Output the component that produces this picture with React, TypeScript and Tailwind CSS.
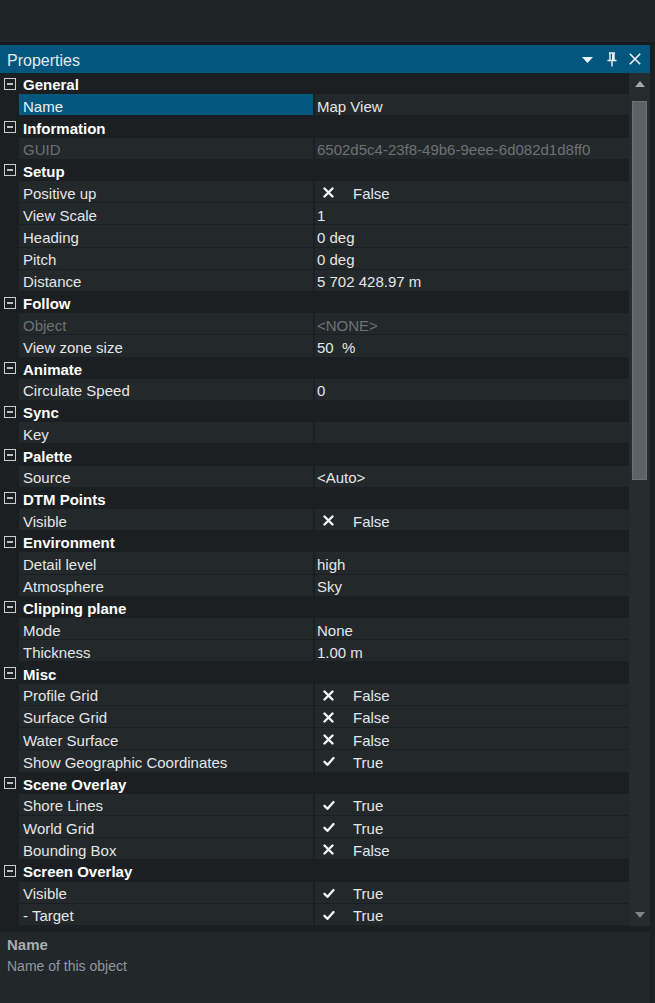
import React from "react";

type Row = { l: string; v?: string; b?: boolean; disabled?: boolean; selected?: boolean };
type Section = { name: string; rows: Row[] };

const sections: Section[] = [
  { name: "General", rows: [{ l: "Name", v: "Map View", selected: true }] },
  { name: "Information", rows: [{ l: "GUID", v: "6502d5c4-23f8-49b6-9eee-6d082d1d8ff0", disabled: true }] },
  {
    name: "Setup",
    rows: [
      { l: "Positive up", b: false },
      { l: "View Scale", v: "1" },
      { l: "Heading", v: "0 deg" },
      { l: "Pitch", v: "0 deg" },
      { l: "Distance", v: "5 702 428.97 m" },
    ],
  },
  {
    name: "Follow",
    rows: [
      { l: "Object", v: "<NONE>", disabled: true },
      { l: "View zone size", v: "50  %" },
    ],
  },
  { name: "Animate", rows: [{ l: "Circulate Speed", v: "0" }] },
  { name: "Sync", rows: [{ l: "Key", v: "" }] },
  { name: "Palette", rows: [{ l: "Source", v: "<Auto>" }] },
  { name: "DTM Points", rows: [{ l: "Visible", b: false }] },
  {
    name: "Environment",
    rows: [
      { l: "Detail level", v: "high" },
      { l: "Atmosphere", v: "Sky" },
    ],
  },
  {
    name: "Clipping plane",
    rows: [
      { l: "Mode", v: "None" },
      { l: "Thickness", v: "1.00 m" },
    ],
  },
  {
    name: "Misc",
    rows: [
      { l: "Profile Grid", b: false },
      { l: "Surface Grid", b: false },
      { l: "Water Surface", b: false },
      { l: "Show Geographic Coordinates", b: true },
    ],
  },
  {
    name: "Scene Overlay",
    rows: [
      { l: "Shore Lines", b: true },
      { l: "World Grid", b: true },
      { l: "Bounding Box", b: false },
    ],
  },
  {
    name: "Screen Overlay",
    rows: [
      { l: "Visible", b: true },
      { l: "- Target", b: true },
    ],
  },
];

const Minus = () => (
  <svg width="12" height="12" viewBox="0 0 12 12" className="shrink-0">
    <rect x="0.5" y="0.5" width="11" height="11" fill="none" stroke="#c9cdd0" strokeWidth="1" />
    <line x1="3" y1="6" x2="9" y2="6" stroke="#e6e8ea" strokeWidth="1.6" />
  </svg>
);

const Cross = () => (
  <svg width="11" height="11" viewBox="0 0 11 11">
    <path d="M1.5 1.5 L9.5 9.5 M9.5 1.5 L1.5 9.5" stroke="#f4f4f4" strokeWidth="2.4" strokeLinecap="round" />
  </svg>
);

const Check = () => (
  <svg width="12" height="11" viewBox="0 0 12 11">
    <path d="M1.5 5.8 L4.6 8.8 L10.5 2" stroke="#f4f4f4" strokeWidth="2.3" fill="none" strokeLinecap="round" strokeLinejoin="round" />
  </svg>
);

function CategoryRow({ name }: { name: string }) {
  return (
    <div className="flex-1 min-h-0 flex items-center bg-[#1b1f21]">
      <div className="w-[19px] flex justify-center pl-[1px]">
        <Minus />
      </div>
      <span className="pl-[4px] pt-[2px] font-bold text-[15px] text-white leading-none">{name}</span>
    </div>
  );
}

function PropRow({ row }: { row: Row }) {
  const labelColor = row.disabled ? "text-[#6d7275]" : "text-[#e4e6e8]";
  return (
    <div className="flex-1 min-h-0 flex bg-[#1b1f21] pb-[1px]">
      <div className="w-[19px] shrink-0" />
      <div
        className={
          "w-[294px] shrink-0 flex items-center pl-[4px] pt-[3px] text-[15px] leading-none " +
          (row.selected ? "bg-[#02587f] text-[#eef2f4]" : "bg-[#23282a] " + labelColor)
        }
      >
        {row.l}
      </div>
      <div className="w-[2px] shrink-0" />
      <div
        className={
          "flex-1 flex items-center pl-[2px] pt-[3px] text-[15px] leading-none whitespace-pre bg-[#23282a] " +
          (row.disabled ? "text-[#6d7275]" : "text-[#e4e6e8]")
        }
      >
        {row.b !== undefined ? (
          <>
            <span className="w-[22px] flex justify-center pl-[1px] -mt-[1px]">{row.b ? <Check /> : <Cross />}</span>
            <span className="pl-[14px]">{row.b ? "True" : "False"}</span>
          </>
        ) : (
          row.v
        )}
      </div>
    </div>
  );
}

export default function App() {
  return (
    <div
      className="w-[655px] h-[1003px] bg-[#1c2023] flex flex-col overflow-hidden"
      style={{ fontFamily: '"Liberation Sans", Arial, sans-serif' }}
    >
      <div className="h-[42px] bg-[#1f2427] shrink-0" />
      <div className="h-[3px] bg-[#181c1e] shrink-0" />
      <div className="flex flex-col w-[650px] flex-1 min-h-0">
        {/* Header */}
        <div className="h-[28px] shrink-0 bg-[#03577f] flex items-center pl-[7px] pr-[9px]">
          <span className="text-[16px] text-[#e3eaee] leading-none flex-1 pt-[3px]">Properties</span>
          <svg width="11" height="7" viewBox="0 0 11 7" className="mr-[14px] mt-[3px]">
            <path d="M0 0 L11 0 L5.5 6 Z" fill="#f2f5f7" />
          </svg>
          <svg width="10" height="15" viewBox="0 0 10 15" className="mr-[12px]">
            <path d="M2 1 H8 M3 1 V8 M7 1 V8 M0.5 8.5 H9.5 M5 9 V14.5" stroke="#f2f5f7" strokeWidth="1.4" fill="none" />
            <rect x="5" y="1.5" width="2" height="6.5" fill="#f2f5f7" />
          </svg>
          <svg width="12" height="12" viewBox="0 0 12 12">
            <path d="M0.8 0.8 L11.2 11.2 M11.2 0.8 L0.8 11.2" stroke="#f2f5f7" strokeWidth="1.6" />
          </svg>
        </div>
        {/* Grid + scrollbar */}
        <div className="h-[853px] shrink-0 flex">
          <div className="flex-1 flex flex-col">
            {sections.map((s) => (
              <React.Fragment key={s.name}>
                <CategoryRow name={s.name} />
                {s.rows.map((r, i) => (
                  <PropRow key={s.name + i} row={r} />
                ))}
              </React.Fragment>
            ))}
          </div>
          <div className="w-[21px] shrink-0 bg-[#262b2e] flex flex-col items-center">
            <div className="h-[22px] flex items-center justify-center">
              <svg width="10" height="6" viewBox="0 0 10 6">
                <path d="M5 0 L10 6 L0 6 Z" fill="#a3a9ad" />
              </svg>
            </div>
            <div className="h-[6px]" />
            <div className="w-[15px] h-[379px] bg-[#5c6266] border border-[#6b7175]" />
            <div className="flex-1" />
            <div className="h-[22px] flex items-center justify-center">
              <svg width="10" height="6" viewBox="0 0 10 6">
                <path d="M0 0 L10 0 L5 6 Z" fill="#80868a" />
              </svg>
            </div>
          </div>
        </div>
        <div className="h-[6px] shrink-0 bg-[#1b1f21]" />
        {/* Description */}
        <div className="flex-1 bg-[#22272a] pl-[7px] pt-[3px] flex flex-col">
          <span className="text-[15px] font-bold text-[#a4aeb4] leading-[20px]">Name</span>
          <span className="text-[14px] text-[#8f999f] leading-[20px] mt-[1px]">Name of this object</span>
        </div>
      </div>
    </div>
  );
}
